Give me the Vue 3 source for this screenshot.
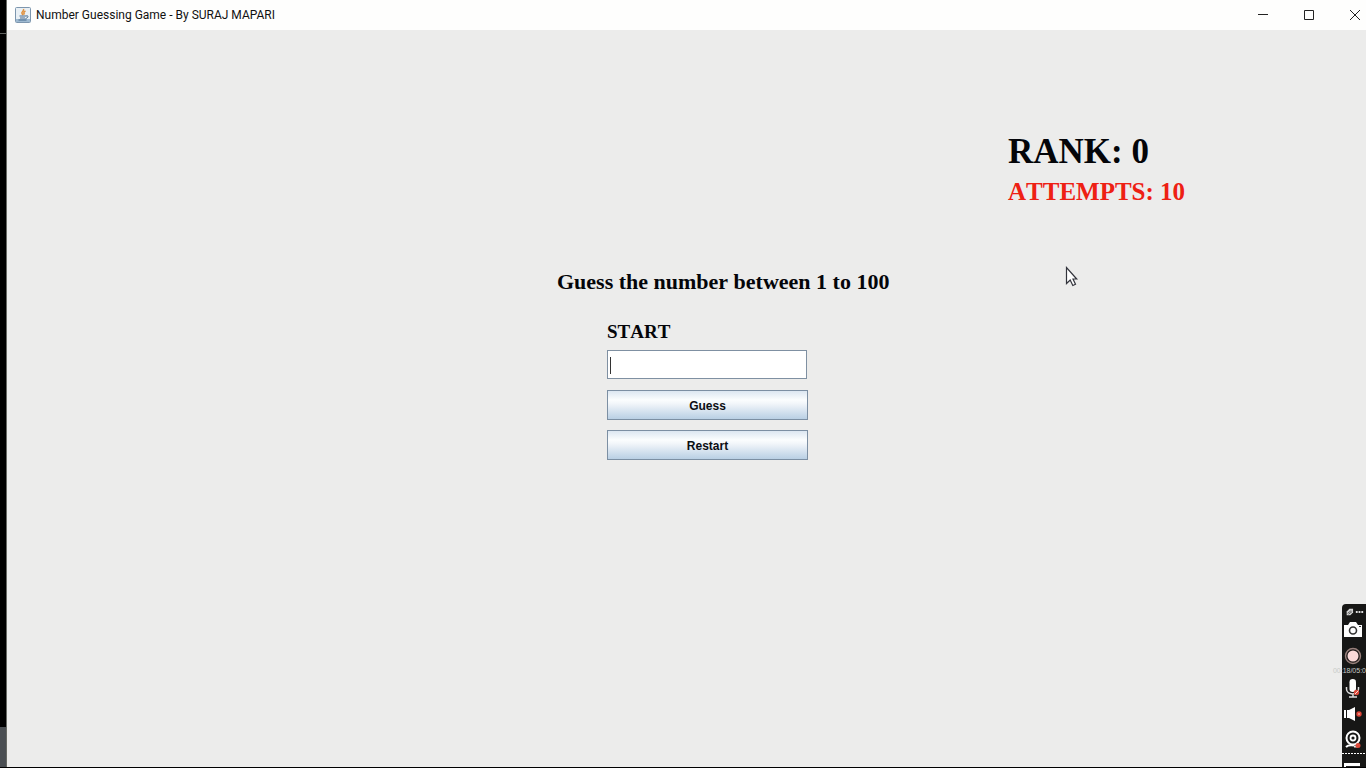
<script setup>
import { ref, onMounted } from 'vue'

const rank = ref(0)
const attempts = ref(10)
const status = ref('START')
const guess = ref('')
const field = ref(null)
let secret = pick()

function pick() {
  return Math.floor(Math.random() * 100) + 1
}

function submit() {
  const value = Number(guess.value)
  if (!guess.value || attempts.value === 0) return
  attempts.value--
  if (value === secret) {
    status.value = 'CORRECT'
    rank.value = attempts.value * 10
  } else {
    status.value = value > secret ? 'TOO HIGH' : 'TOO LOW'
  }
  guess.value = ''
}

function restart() {
  secret = pick()
  attempts.value = 10
  rank.value = 0
  status.value = 'START'
  guess.value = ''
}

onMounted(() => field.value.focus())
</script>

<template>
  <div class="screen">
    <div class="desktop"><span class="edge"></span><span class="task"></span></div>
    <div class="window">
      <header class="titlebar">
        <svg class="java" viewBox="0 0 16 16" aria-hidden="true">
          <rect x="0.5" y="0.5" width="15" height="15" rx="1" fill="#e9f0f5" stroke="#7d96ae" />
          <rect x="1" y="12" width="14" height="3" fill="#9fbad1" />
          <path d="M8.500 2c1 2-2.600 2.800-1.500 4.500l1 1.500M10.500 4C8.500 5 8.500 6 9.500 7.500" fill="none" stroke="#e0913f" stroke-width="1.500" />
          <path d="M4.500 9h6.500M5 11h5M3.500 13h8M11 9c3-1 2.500 2-.5 2.500" fill="none" stroke="#47698c" />
        </svg>
        <span class="caption">Number Guessing Game - By SURAJ MAPARI</span>
        <div class="controls">
          <button type="button" aria-label="Minimize"><svg viewBox="0 0 12 12"><path d="M1 5.500h10" /></svg></button>
          <button type="button" aria-label="Maximize"><svg viewBox="0 0 12 12"><path d="M1.500 1.500h9v9h-9z" /></svg></button>
          <button type="button" aria-label="Close"><svg viewBox="0 0 12 12"><path d="M1 1l10 10M11 1L1 11" /></svg></button>
        </div>
      </header>
      <main class="content">
        <section class="score">
          <div class="rank">RANK: {{ rank }}</div>
          <div class="attempts">ATTEMPTS: {{ attempts }}</div>
        </section>
        <form class="game" @submit.prevent="submit">
          <h1>Guess the number between 1 to 100</h1>
          <div class="fields">
            <label for="guess">{{ status }}</label>
            <input id="guess" ref="field" v-model="guess" :class="{ empty: !guess }" type="text" autocomplete="off" />
            <button type="submit">Guess</button>
            <button type="button" @click="restart">Restart</button>
          </div>
        </form>
      </main>
    </div>

    <aside class="recorder">
      <svg class="top" viewBox="0 0 24 12" aria-hidden="true">
        <path d="M4 10V6l3-3h4v4l-3 3z" fill="#d5d5d5" />
        <path d="M5 8l4-3M6 9l4-3" stroke="#555" />
        <path d="M14 6.500h8" stroke="#ddd" stroke-width="2" stroke-dasharray="2 1" />
      </svg>
      <button type="button" aria-label="Screenshot">
        <svg viewBox="0 0 24 24">
          <path d="M2 7h4l2-3h6l2 3h4v12H2z" fill="#fff" />
          <circle cx="11" cy="12.500" r="3.500" fill="#fff" stroke="#333" stroke-width="1.600" />
          <path d="M17 8.500h2" stroke="#333" />
        </svg>
      </button>
      <button type="button" aria-label="Record">
        <svg viewBox="0 0 24 24">
          <circle cx="11" cy="13" r="7.500" fill="#211a19" stroke="#99817c" stroke-width="1.400" />
          <circle cx="11" cy="13" r="5.500" fill="#fbd9d8" />
        </svg>
      </button>
      <div class="timer">00:18/05:0</div>
      <button type="button" aria-label="Microphone">
        <svg viewBox="0 0 24 24">
          <rect x="7.500" y="3" width="6.500" height="13" rx="3.200" fill="#fff" />
          <path d="M4.500 11v2c0 6.500 12 6.500 12 0v-2M11 18v3M7 21h8" fill="none" stroke="#ddd" stroke-width="1.500" />
          <circle cx="14.500" cy="16.500" r="2.700" fill="#d94a3c" />
          <path d="M13 18l3-3" stroke="#ffd8d2" />
        </svg>
      </button>
      <button type="button" aria-label="Speaker">
        <svg viewBox="0 0 24 24">
          <path d="M2 9h2v8H2zM5 9h2l6-3v14l-6-3H5z" fill="#fff" />
          <circle cx="17" cy="13" r="2.700" fill="#e0473a" />
          <path d="M16 13h2" stroke="#ffc9c2" />
        </svg>
      </button>
      <button type="button" aria-label="Webcam">
        <svg viewBox="0 0 24 24">
          <circle cx="11" cy="12" r="6.500" fill="none" stroke="#fff" stroke-width="2" />
          <circle cx="11" cy="12" r="2.500" fill="none" stroke="#fff" stroke-width="1.800" />
          <path d="M4 21c2-2 5-2 8-1.500" fill="none" stroke="#fff" stroke-width="2" />
          <path d="M12 20.500h4" stroke="#eee" stroke-width="2" />
          <circle cx="16" cy="19.500" r="2.500" fill="#dc4a3b" />
        </svg>
      </button>
      <svg class="foot" viewBox="0 0 24 17" aria-hidden="true">
        <path d="M0 3.500h24" stroke="#fff" stroke-dasharray="2 1" />
        <path d="M2 13h16v4H2z" fill="#fff" />
        <path d="M4 16.500h14" stroke="#222" />
      </svg>
    </aside>

    <svg class="pointer" viewBox="0 0 14 22" aria-hidden="true">
      <path d="M1.500 1.500v16l3.700-3.500 2.600 5.500 2.700-1.300-2.500-5.200h3.700z" fill="#fff" stroke="#33343c" stroke-width="1.200" />
    </svg>
  </div>
</template>

<style>
body {
  margin: 0;
  background: #ececeb;
}
</style>

<style scoped>
* {
  box-sizing: border-box;
}
.screen {
  position: relative;
  display: flex;
  min-height: 100vh;
  overflow: hidden;
  border-bottom: 1px solid #000;
}
.desktop {
  display: flex;
  flex-direction: column;
  justify-content: space-between;
  width: 7px;
  background: #000;
  border-right: 1px solid #686a65;
}
.edge {
  height: 34px;
  border-bottom: 1px solid #60625f;
}
.task {
  height: 40px;
  background: #4b4f53;
}
.window {
  flex: 1;
  background: #ececeb;
}
.titlebar {
  display: flex;
  align-items: center;
  height: 30px;
  padding-left: 8px;
  background: #fefefd;
}
.java {
  width: 16px;
  height: 16px;
}
.caption {
  flex: 1;
  margin-left: 5px;
  font: 12px/28px Roboto, sans-serif;
  color: #111;
}
.controls {
  display: flex;
}
.controls button {
  display: grid;
  place-items: center;
  width: 46px;
  height: 28px;
  padding: 0;
  border: 0;
  background: none;
}
.controls button:last-child {
  width: 34px;
  justify-content: end;
  padding-right: 5px;
}
.controls svg {
  width: 12px;
  height: 12px;
  fill: none;
  stroke: #222;
}
.content {
  display: grid;
  grid-template-columns: 550fr 451fr 358fr;
  grid-template-rows: auto auto;
  row-gap: 60px;
  padding-top: 101px;
  font-family: "Liberation Serif", "Times New Roman", serif;
  font-weight: bold;
  font-kerning: none;
  color: #040509;
}
.score {
  grid-column: 3;
}
.rank {
  font-size: 35px;
  line-height: 42px;
}
.attempts {
  font-size: 25px;
  line-height: 37px;
  color: #ee2013;
}
.game {
  grid-column: 2;
}
h1 {
  margin: 0;
  font-size: 22px;
  line-height: 24px;
  white-space: nowrap;
}
.fields {
  display: flex;
  flex-direction: column;
  gap: 10px;
  width: 201px;
  margin: 26px 0 0 50px;
}
label {
  font-size: 19px;
  line-height: 24px;
}
.fields input {
  width: 200px;
  height: 29px;
  margin: -4px 0 1px;
  padding: 0 2px;
  border: 1px solid #7f90a2;
  border-radius: 0;
  outline: none;
  background: #fff;
  font: 18px "Liberation Sans", Arial, sans-serif;
}
.fields input.empty {
  background: linear-gradient(#333, #333) 2px 6px / 1px 17px no-repeat #fff;
  caret-color: transparent;
}
.fields button {
  height: 30px;
  padding: 2px 0 0;
  border: 1px solid #7c8fa3;
  border-radius: 0;
  background: linear-gradient(#dce7f1, #fbfdfe 32%, #f2f6fa 45%, #b9cfe4);
  font: bold 12px "Liberation Sans", Arial, sans-serif;
  color: #0b0d12;
}
.recorder {
  position: absolute;
  right: 0;
  bottom: 0;
  display: flex;
  flex-direction: column;
  width: 24px;
  padding-top: 2px;
  border-radius: 4px 0 0 0;
  background: #171716;
}
.recorder svg {
  display: block;
  width: 24px;
}
.recorder button {
  height: 25px;
  padding: 0;
  border: 0;
  background: none;
}
.top {
  height: 11px;
}
.timer {
  align-self: flex-end;
  font: 7px/8px "Liberation Sans", Arial, sans-serif;
  color: #c8cbc8;
  white-space: nowrap;
}
.foot {
  height: 17px;
}
.pointer {
  position: absolute;
  left: 1065px;
  top: 266px;
  width: 14px;
  height: 22px;
}
</style>
